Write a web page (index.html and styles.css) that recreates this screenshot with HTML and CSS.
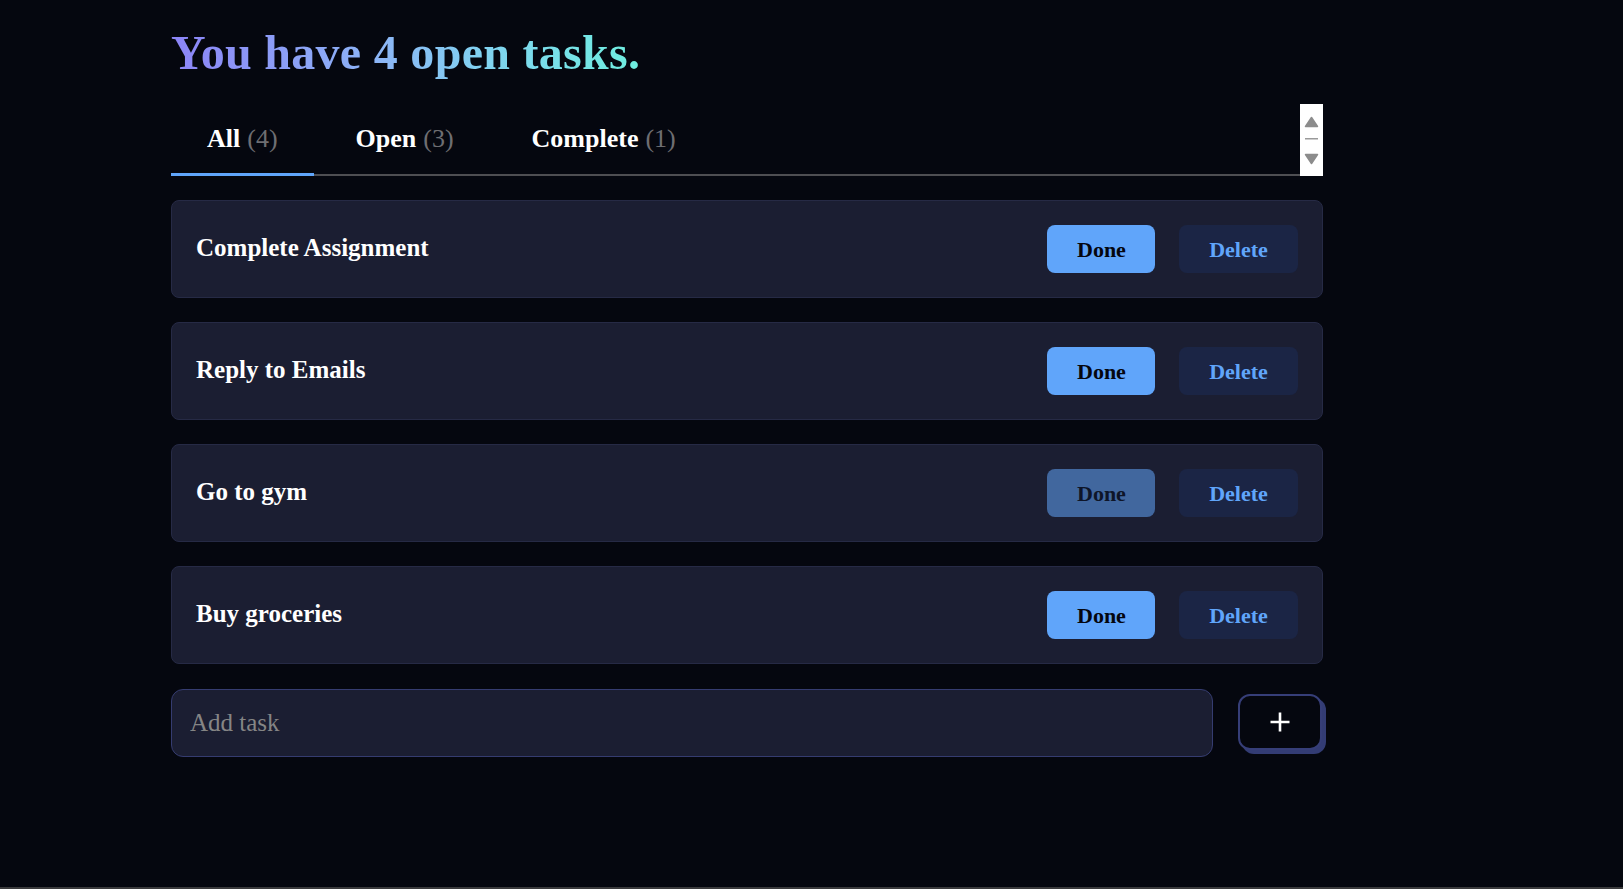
FILE: index.html
```html
<!DOCTYPE html>
<html lang="en">
<head>
<meta charset="utf-8">
<title>Tasks</title>
<link rel="stylesheet" href="styles.css">
</head>
<body>
<main class="app">
  <h1 class="heading"><span class="heading-text">You have 4 open tasks.</span></h1>

  <div class="tabs-wrap">
    <nav class="tabs">
      <button class="tab tab-active"><span class="tab-label">All</span><span class="tab-count">(4)</span></button>
      <button class="tab"><span class="tab-label">Open</span><span class="tab-count">(3)</span></button>
      <button class="tab"><span class="tab-label">Complete</span><span class="tab-count">(1)</span></button>
    </nav>
    <div class="scrollbar">
      <svg width="23" height="72" viewBox="0 0 23 72">
        <path d="M11.5 13.5 L17.5 22.5 L5.5 22.5 Z" fill="#8c8c8c" stroke="#8c8c8c" stroke-width="1.5" stroke-linejoin="round"/>
        <rect x="5" y="34" width="13" height="1.5" fill="#9a9a9a"/>
        <path d="M5.5 50.5 L17.5 50.5 L11.5 59.5 Z" fill="#8c8c8c" stroke="#8c8c8c" stroke-width="1.5" stroke-linejoin="round"/>
      </svg>
    </div>
  </div>

  <ul class="task-list">
    <li class="task">
      <span class="task-name">Complete Assignment</span>
      <div class="task-actions">
        <button class="btn btn-done">Done</button>
        <button class="btn btn-delete">Delete</button>
      </div>
    </li>
    <li class="task">
      <span class="task-name">Reply to Emails</span>
      <div class="task-actions">
        <button class="btn btn-done">Done</button>
        <button class="btn btn-delete">Delete</button>
      </div>
    </li>
    <li class="task">
      <span class="task-name">Go to gym</span>
      <div class="task-actions">
        <button class="btn btn-done btn-disabled">Done</button>
        <button class="btn btn-delete">Delete</button>
      </div>
    </li>
    <li class="task">
      <span class="task-name">Buy groceries</span>
      <div class="task-actions">
        <button class="btn btn-done">Done</button>
        <button class="btn btn-delete">Delete</button>
      </div>
    </li>
  </ul>

  <form class="add-row">
    <input class="add-input" type="text" placeholder="Add task">
    <button type="button" class="add-btn" aria-label="Add">
      <svg width="22" height="22" viewBox="0 0 22 22">
        <path d="M11 1.5 V20.5 M1.5 11 H20.5" stroke="#ffffff" stroke-width="2.6" stroke-linecap="butt"/>
      </svg>
    </button>
  </form>
</main>
<div class="window-edge"></div>
</body>
</html>
```

FILE: styles.css
```css
* {
  box-sizing: border-box;
}

html, body {
  margin: 0;
  padding: 0;
}

body {
  background: #05070f;
  color: #ffffff;
  font-family: "Liberation Serif", "Times New Roman", serif;
  min-height: 100vh;
  display: flex;
  flex-direction: column;
}

.app {
  flex: 1;
  width: 1152px;
  margin-left: 171px;
  padding-top: 25px;
}

.heading {
  margin: 0;
  font-size: 48px;
  line-height: 56px;
  font-weight: 700;
  letter-spacing: 0.3px;
}

.heading-text {
  display: inline-block;
  background: linear-gradient(90deg, #8c84f7 0%, #8cb6f6 45%, #7fd6ef 70%, #6eeedf 100%);
  -webkit-background-clip: text;
  background-clip: text;
  color: transparent;
}

.tabs-wrap {
  margin-top: 23px;
  display: flex;
  height: 72px;
}

.tabs {
  flex: 1;
  display: flex;
  gap: 6px;
  box-shadow: inset 0 -2px 0 #4e4e52;
}

.tab {
  background: none;
  border: 0;
  border-bottom: 3px solid transparent;
  padding: 0 36px;
  display: flex;
  align-items: center;
  gap: 7px;
  font-family: inherit;
  font-size: 26px;
  color: #ffffff;
  cursor: pointer;
}

.tab-active {
  border-bottom-color: #60a5fa;
}

.tab-label {
  font-weight: 700;
}

.tab-count {
  color: #6e6e72;
  font-weight: 400;
}

.scrollbar {
  width: 23px;
  background: #ffffff;
  display: flex;
}

.task-list {
  list-style: none;
  margin: 24px 0 0;
  padding: 0;
  display: flex;
  flex-direction: column;
  gap: 24px;
}

.task {
  height: 98px;
  background: #1b1e32;
  border: 1px solid #262a45;
  border-radius: 8px;
  padding: 0 24px;
  display: flex;
  align-items: center;
  justify-content: space-between;
}

.task-name {
  font-size: 25px;
  font-weight: 700;
  margin-bottom: 3px;
}

.task-actions {
  display: flex;
  gap: 24px;
}

.btn {
  height: 48px;
  padding: 2px 30px 0;
  border: 0;
  border-radius: 8px;
  font-family: inherit;
  font-size: 22px;
  font-weight: 700;
  cursor: pointer;
}

.btn-done {
  background: #60a5fa;
  color: #05070f;
  width: 108px;
}

.btn-disabled {
  background: #41679e;
  color: #0e1528;
}

.btn-delete {
  background: #1b2545;
  color: #60a5fa;
  width: 119px;
}

.add-row {
  margin-top: 25px;
  display: flex;
  align-items: center;
  gap: 25px;
}

.add-input {
  width: 1042px;
  height: 68px;
  background: #1b1e32;
  border: 1px solid #353c70;
  border-radius: 12px;
  padding: 0 18px;
  font-family: inherit;
  font-size: 25px;
  color: #ffffff;
  outline: none;
}

.add-input::placeholder {
  color: #858585;
}

.add-btn {
  width: 84px;
  height: 56px;
  margin-top: -2px;
  background: #05070f;
  border: 2px solid #363e78;
  border-radius: 12px;
  box-shadow: 4px 4px 0 #333c74;
  display: flex;
  align-items: center;
  justify-content: center;
  padding: 0;
  cursor: pointer;
}

.add-btn svg {
  display: block;
}

.window-edge {
  height: 2px;
  background: #3a3a3c;
}
```
